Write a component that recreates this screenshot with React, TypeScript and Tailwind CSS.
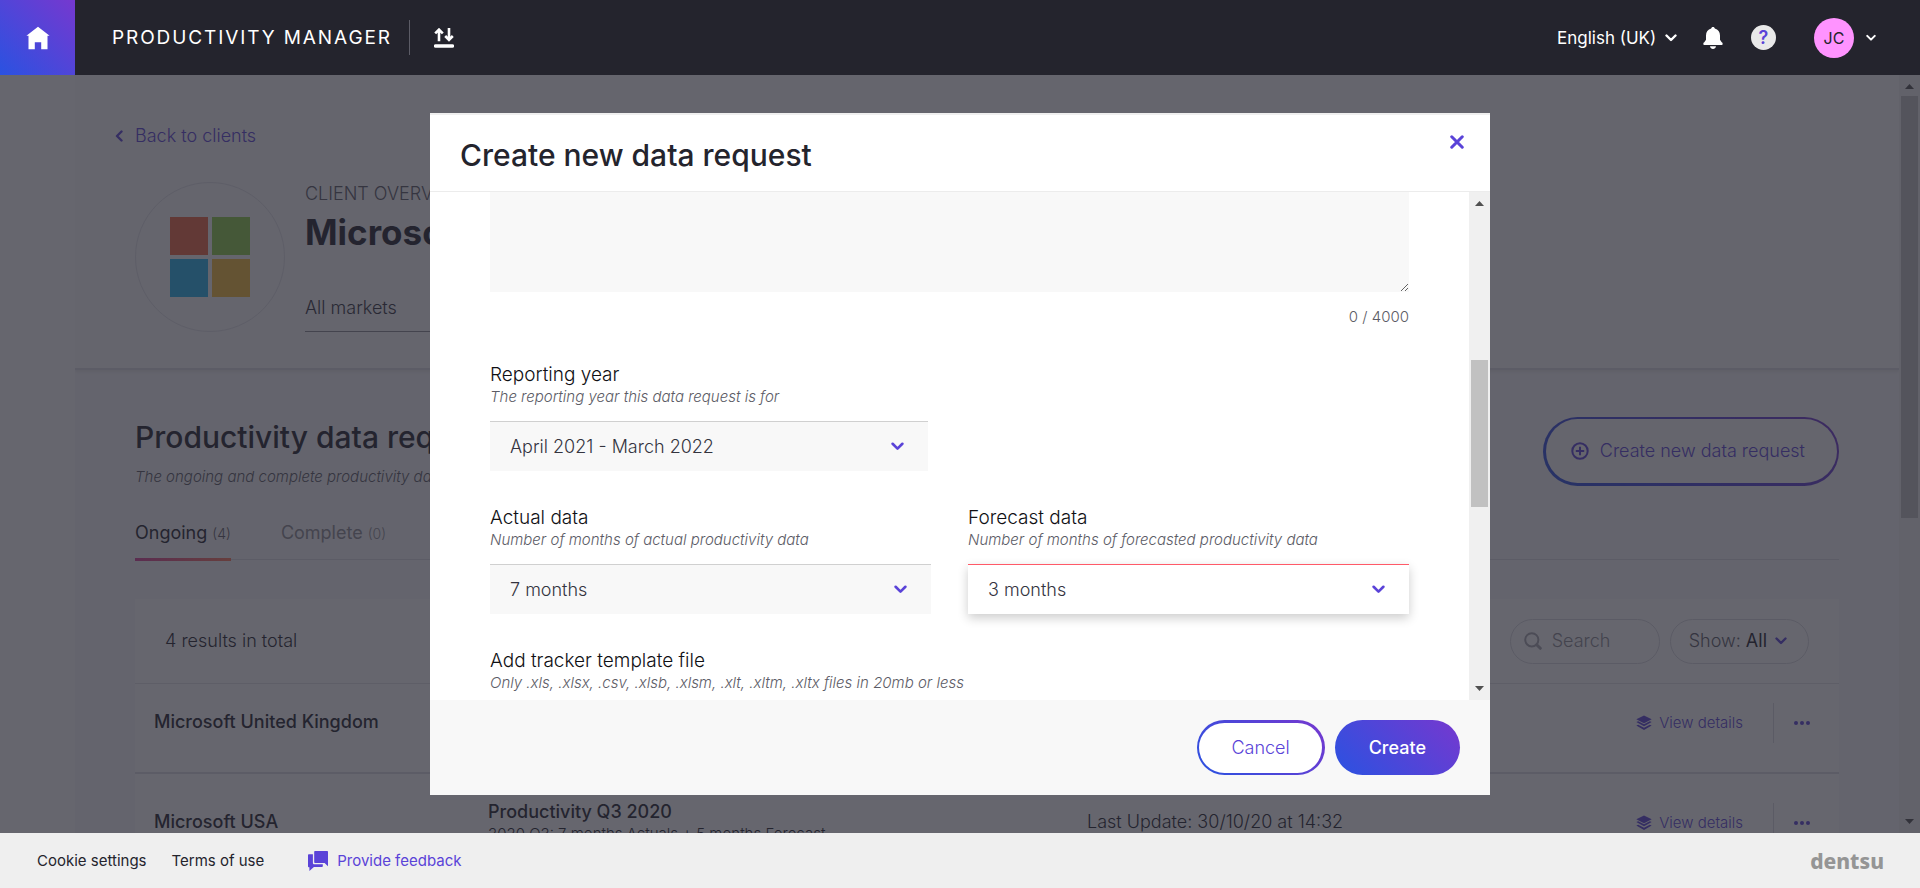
import React from "react";

type IconProps = { className?: string };

function Chevron({ className = "" }: IconProps) {
  return (
    <svg viewBox="0 0 12 8" fill="none" stroke="currentColor" strokeLinecap="round" strokeLinejoin="round" strokeWidth="2.4" className={className} aria-hidden="true">
      <path d="M1.5 1.5 6 6l4.5-4.5" />
    </svg>
  );
}

function HomeIcon() {
  return (
    <svg viewBox="0 0 24 24" fill="currentColor" className="size-6" aria-hidden="true">
      <path d="M12 .8 .4 9.8h2.100V23.200h6.300v-7h6.400v7h6.300V9.800h2.100z" />
    </svg>
  );
}

function TransferIcon() {
  return (
    <svg viewBox="0 0 20 20" fill="none" stroke="currentColor" className="size-5" aria-hidden="true">
      <path d="M5 13.200V1.800M1.200 5.400 5 1.600l3.800 3.800M15 0v11.600M11.200 8l3.800 3.800L18.800 8" strokeWidth="2.600" />
      <path d="M1.500 18h17" strokeWidth="3.400" strokeLinecap="round" />
    </svg>
  );
}

function BellIcon() {
  return (
    <svg viewBox="0 0 20 22" fill="currentColor" className="h-[22px] w-5" aria-hidden="true">
      <path d="M10 0c-1 0-1.700.7-1.800 1.500C4.900 2.300 3 5 3 8.500v4.300L1.300 15.200C0 15.400 0 18 1.200 18h17.600c1.200 0 1.200-2.600-.1-2.800L17 12.800V8.500c0-3.500-1.900-6.200-5.200-7C11.700.7 11 0 10 0zM7 19.200h6c-.3 1.700-1.500 2.800-3 2.800s-2.700-1.100-3-2.800z" />
    </svg>
  );
}

function LayersIcon() {
  return (
    <svg viewBox="0 0 16 16" fill="currentColor" className="size-4" aria-hidden="true">
      <path d="M8 .5 15.700 4.300 8 8.300.3 4.300z" />
      <path d="M.3 7.100 2.200 6.200 8 9.300l5.800-3.100 1.900.9L8 11.300z" />
      <path d="M.3 10.600 2.200 9.700 8 12.800l5.800-3.100 1.900.9L8 15.100z" />
    </svg>
  );
}

function FeedbackIcon() {
  return (
    <svg viewBox="0 0 20 20" fill="currentColor" className="size-5" aria-hidden="true">
      <path d="M7 0h12.200c.5 0 .8.300.8.800V15.300L16.600 12H7c-.5 0-.8-.3-.8-.8V.8c0-.5.3-.8.800-.8z" />
      <path d="M.8 3.200H4.900v8.700c0 .8.600 1.400 1.400 1.400h8.500v2c0 .5-.3.800-.8.800H5.900L1.400 20v-3.700H.8c-.5 0-.8-.3-.8-.8V4c0-.5.300-.8.800-.8z" />
    </svg>
  );
}

function TopBar() {
  return (
    <header className="flex h-[75px] shrink-0 items-center bg-[#24242d] text-white">
      <a href="#home" aria-label="Home" className="flex size-[75px] items-center justify-center bg-[linear-gradient(45deg,#2a52e1,#7638cf)]">
        <HomeIcon />
      </a>
      <span className="ml-[37px] text-[19px] leading-6 tracking-widest">PRODUCTIVITY MANAGER</span>
      <span className="ml-[17px] h-[35px] w-px bg-[#5c5c66]" />
      <button type="button" aria-label="Transfers" className="ml-6">
        <TransferIcon />
      </button>
      <div className="ml-auto flex items-center pr-11">
        <select aria-label="Language" className="appearance-none bg-transparent text-[17px] leading-6">
          <option>English (UK)</option>
        </select>
        <Chevron className="ml-2 h-2 w-3" />
        <button type="button" aria-label="Notifications" className="ml-[26px]">
          <BellIcon />
        </button>
        <button type="button" aria-label="Help" className="ml-7 flex size-[25px] items-center justify-center rounded-full bg-[#e9e9e9] text-lg leading-6 font-semibold text-[#5a43d8]">
          ?
        </button>
        <button type="button" className="ml-[38px] flex items-center gap-3">
          <span className="flex size-10 items-center justify-center rounded-full bg-[#ff93ff] text-base text-[#24242d]">JC</span>
          <Chevron className="h-2 w-[10px]" />
        </button>
      </div>
    </header>
  );
}

function ClientPanel() {
  return (
    <section className="border-b-2 border-[#dedee4] bg-[#fafafa] pt-[49px] pb-9 shadow-[0_2px_3px_rgba(0,0,0,0.08)]">
      <a href="#clients" className="ml-[38px] flex w-fit items-center gap-[10px] text-lg leading-6 font-light text-[#5a43d8]">
        <Chevron className="h-2 w-3 rotate-90" />
        Back to clients
      </a>
      <div className="mt-[34px] flex gap-5 pl-[60px]">
        <div className="flex size-[150px] items-center justify-center rounded-full border border-[#e3e3e8]">
          <svg viewBox="0 0 80 80" className="size-20" role="img" aria-label="Microsoft">
            <path fill="#f26a43" d="M0 0h38v38H0z" />
            <path fill="#8fd04a" d="M42 0h38v38H42z" />
            <path fill="#25b5ee" d="M0 42h38v38H0z" />
            <path fill="#f8c03a" d="M42 42h38v38H42z" />
          </svg>
        </div>
        <div className="flex w-[400px] flex-col">
          <span className="text-lg leading-6 font-light text-[#5c5c66]">CLIENT OVERVIEW</span>
          <h1 className="mt-1 text-[35px] leading-[44px] font-bold text-[#24242d]">Microsoft</h1>
          <button type="button" className="mt-auto border-b border-[#8c8c94] pb-[11px] text-left text-lg leading-6 font-light text-[#34343f]">
            All markets
          </button>
        </div>
      </div>
    </section>
  );
}

function RowActions() {
  return (
    <div className="flex h-10 items-center justify-end pr-[29px] text-[#5a43d8]">
      <a href="#details" className="flex items-center gap-[7px] text-[15px] leading-5 font-light">
        <LayersIcon />
        View details
      </a>
      <span className="ml-[30px] h-10 w-px bg-[#dadae0]" />
      <button type="button" aria-label="More actions" className="ml-5">
        <svg viewBox="0 0 16 4" fill="currentColor" className="h-1 w-4" aria-hidden="true">
          <circle cx="2" cy="2" r="2" />
          <circle cx="8" cy="2" r="2" />
          <circle cx="14" cy="2" r="2" />
        </svg>
      </button>
    </div>
  );
}

function RequestsSection() {
  return (
    <section className="px-[60px] pt-[47px]">
      <div className="flex items-start justify-between">
        <div>
          <h2 className="text-[30px] leading-10 font-medium text-[#24242d]">Productivity data requests</h2>
          <p className="mt-[10px] text-[15px] leading-5 font-light text-[#5c5c66] italic">The ongoing and complete productivity data requests</p>
        </div>
        <button
          type="button"
          className="flex h-[69px] items-center gap-[11px] rounded-full border-t-2 border-r-2 border-b-3 border-l-3 border-transparent bg-[linear-gradient(#fafafa,#fafafa),linear-gradient(45deg,#2a52e1,#7638cf)] px-[25px] pr-8 text-lg leading-6 font-light text-[#5a43d8] [background-clip:padding-box,border-box] [background-origin:border-box]"
        >
          <svg viewBox="0 0 18 18" fill="none" stroke="currentColor" strokeWidth="2" className="size-[18px]" aria-hidden="true">
            <circle cx="9" cy="9" r="7.700" />
            <path d="M9 4.800v8.400M4.800 9h8.400" />
          </svg>
          Create new data request
        </button>
      </div>
      <div className="mt-[34px] flex gap-[50px] border-b border-[#dedee4] text-lg leading-6">
        <button type="button" className="relative pb-[14px] text-[#24242d]">
          Ongoing <span className="text-sm font-light text-[#5c5c66]">(4)</span>
          <span className="absolute inset-x-0 -bottom-[2px] h-[3px] bg-[linear-gradient(90deg,#d8409a,#ff7a5c)]" />
        </button>
        <button type="button" className="pb-[14px] text-[#8c8c94]">
          Complete <span className="text-sm font-light">(0)</span>
        </button>
      </div>
      <div className="mt-[39px] bg-white">
        <div className="flex h-[85px] items-center border-b border-[#e3e3e8] px-[30px]">
          <span className="text-lg leading-6 font-light text-[#24242d]">4 results in total</span>
          <label className="ml-auto flex h-[45px] w-[150px] items-center gap-[10px] rounded-full border border-[#dadae0] px-[13px]">
            <svg viewBox="0 0 18 18" fill="none" stroke="#a8a8b0" className="size-[18px] shrink-0" aria-hidden="true">
              <circle cx="7.800" cy="7.800" r="6.600" strokeWidth="2" />
              <path d="m12.700 12.700 3.600 3.600" strokeWidth="3" strokeLinecap="round" />
            </svg>
            <input type="search" aria-label="Search" placeholder="Search" className="w-full min-w-0 bg-transparent text-lg leading-6 font-light placeholder:text-[#8c8c94]" />
          </label>
          <button type="button" className="ml-[10px] flex h-[45px] items-center rounded-full border border-[#dadae0] pr-[21px] pl-[18px] text-lg leading-6 font-light text-[#5c5c66]">
            Show:&nbsp;<span className="font-normal text-[#24242d]">All</span>
            <Chevron className="ml-2 h-2 w-3 text-[#5a43d8]" />
          </button>
        </div>
        <table className="w-full table-fixed border-collapse text-left">
          <colgroup>
            <col className="w-[353px]" />
            <col className="w-[599px]" />
            <col />
            <col className="w-[300px]" />
          </colgroup>
          <tbody className="align-top">
            <tr className="h-[89px] border-b-2 border-[#dedee4]">
              <th scope="row" className="pt-[26px] pl-[19px] text-lg leading-6 font-medium text-[#24242d]">Microsoft United Kingdom</th>
              <td />
              <td />
              <td className="pt-[19px]"><RowActions /></td>
            </tr>
            <tr className="h-[99px] border-b-2 border-[#dedee4]">
              <th scope="row" className="pt-9 pl-[19px] text-lg leading-6 font-medium text-[#24242d]">Microsoft USA</th>
              <td className="pt-[26px]">
                <div className="text-lg leading-6 font-medium text-[#24242d]">Productivity Q3 2020</div>
                <div className="text-[15px] leading-5 font-light text-[#24242d]">2020 Q3: 7 months Actuals + 5 months Forecast</div>
              </td>
              <td className="pt-9 text-lg leading-6 font-light text-[#24242d]">Last Update: 30/10/20 at 14:32</td>
              <td className="pt-[29px]"><RowActions /></td>
            </tr>
          </tbody>
        </table>
      </div>
    </section>
  );
}

function ScrollRail({ thumbClass }: { thumbClass: string }) {
  return (
    <div aria-hidden="true" className="flex w-[21px] shrink-0 flex-col items-center bg-[#f0f0f0] py-[9px] text-[#505050]">
      <svg viewBox="0 0 9 5" fill="currentColor" className="h-[5px] w-[9px] shrink-0"><path d="M0 5 4.500 0 9 5z" /></svg>
      <div className={"w-[17px] shrink-0 bg-[#c1c1c1] " + thumbClass} />
      <svg viewBox="0 0 9 5" fill="currentColor" className="mt-auto h-[5px] w-[9px] shrink-0"><path d="M0 0 4.500 5 9 0z" /></svg>
    </div>
  );
}

type FieldProps = { id: string; label: string; hint: string; children?: React.ReactNode };

function Field({ id, label, hint, children }: FieldProps) {
  return (
    <div>
      <label htmlFor={id} className="block text-[19px] leading-6 font-light text-[#101014]">{label}</label>
      <p className="text-[15px] leading-5 font-light text-[#5c5c66] italic">{hint}</p>
      {children}
    </div>
  );
}

function SelectBox({ id, value, className }: { id: string; value: string; className: string }) {
  return (
    <div className="relative mt-[14px]">
      <select id={id} className={"h-[50px] w-full appearance-none border-t px-5 text-lg leading-6 font-light text-[#34343f] " + className}>
        <option>{value}</option>
      </select>
      <Chevron className="pointer-events-none absolute top-[21px] right-6 h-[9px] w-[13px] text-[#5a43d8]" />
    </div>
  );
}

function RequestDialog() {
  return (
    <div role="dialog" aria-modal="true" aria-labelledby="dialog-title" className="flex w-[1060px] max-w-full flex-col border-t-2 border-[#efefef] bg-white">
      <div className="flex items-start justify-between border-b border-[#ececec] pt-5 pr-[26px] pb-4 pl-[30px]">
        <h2 id="dialog-title" className="text-[30px] leading-10 font-medium text-[#24242d]">Create new data request</h2>
        <button type="button" aria-label="Close" className="text-[#5a43d8]">
          <svg viewBox="0 0 12 12" fill="none" stroke="currentColor" strokeWidth="2.600" strokeLinecap="round" className="size-[14px]" aria-hidden="true">
            <path d="m1.500 1.500 9 9M10.500 1.500l-9 9" />
          </svg>
        </button>
      </div>
      <div className="flex min-h-0 flex-1">
        <form className="min-w-0 flex-1 overflow-hidden px-[60px]">
          <textarea aria-label="Description" className="block h-[100px] w-full resize bg-[#f8f8f8]" />
          <p className="mt-[13px] text-right text-[15px] leading-6 font-light text-[#5c5c66]">0 / 4000</p>
          <div className="mt-[34px] w-[438px]">
            <Field id="reporting-year" label="Reporting year" hint="The reporting year this data request is for">
              <SelectBox id="reporting-year" value="April 2021 - March 2022" className="border-[#d0d0d0] bg-[#f8f8f8]" />
            </Field>
          </div>
          <div className="mt-[35px] grid grid-cols-2 gap-[37px]">
            <Field id="actual-data" label="Actual data" hint="Number of months of actual productivity data">
              <SelectBox id="actual-data" value="7 months" className="border-[#d0d0d0] bg-[#f8f8f8]" />
            </Field>
            <Field id="forecast-data" label="Forecast data" hint="Number of months of forecasted productivity data">
              <SelectBox id="forecast-data" value="3 months" className="border-[#ff5a68] bg-white shadow-[0_4px_10px_rgba(0,0,0,0.2)]" />
            </Field>
          </div>
          <div className="mt-[35px]">
            <Field id="template-file" label="Add tracker template file" hint="Only .xls, .xlsx, .csv, .xlsb, .xlsm, .xlt, .xltm, .xltx files in 20mb or less">
              <input id="template-file" type="file" className="mt-[14px] block" />
            </Field>
          </div>
        </form>
        <ScrollRail thumbClass="mt-[154px] h-[147px]" />
      </div>
      <div className="flex justify-end gap-[10px] bg-[#f8f8f8] px-[30px] py-5 text-lg leading-6">
        <button
          type="button"
          className="h-[55px] rounded-full border-t-3 border-r-3 border-b-2 border-l-2 border-transparent bg-[linear-gradient(#fff,#fff),linear-gradient(45deg,#2a52e1,#7638cf)] px-8 font-light text-[#5a43d8] [background-clip:padding-box,border-box] [background-origin:border-box]"
        >
          Cancel
        </button>
        <button type="button" className="h-[55px] rounded-full bg-[linear-gradient(45deg,#2a52e1,#7638cf)] px-[34px] font-medium text-white">
          Create
        </button>
      </div>
    </div>
  );
}

export default function App() {
  return (
    <div className="flex h-screen flex-col overflow-hidden bg-white font-['Inter','Liberation_Sans',sans-serif]">
      <TopBar />
      <div className="relative flex min-h-0 flex-1">
        <div className="w-[75px] shrink-0 bg-white" />
        <main className="min-w-0 flex-1 overflow-hidden bg-[#f9f9fa]">
          <ClientPanel />
          <RequestsSection />
        </main>
        <ScrollRail thumbClass="mt-[7px] h-[422px]" />
        <div className="absolute inset-0 flex justify-center bg-[#252531]/70 py-[38px]">
          <RequestDialog />
        </div>
      </div>
      <footer className="flex h-[55px] shrink-0 items-center bg-[#efefef] pr-[36px] pl-[37px] text-[15px] leading-5 text-[#24242d]">
        <a href="#cookies">Cookie settings</a>
        <a href="#terms" className="ml-[25px]">Terms of use</a>
        <a href="#feedback" className="ml-11 flex items-center gap-[9px] text-[#5a43d8]">
          <FeedbackIcon />
          Provide feedback
        </a>
        <span className="ml-auto font-['Noto_Sans',sans-serif] text-[21px] leading-6 font-extrabold text-[#959595]">dentsu</span>
      </footer>
    </div>
  );
}
